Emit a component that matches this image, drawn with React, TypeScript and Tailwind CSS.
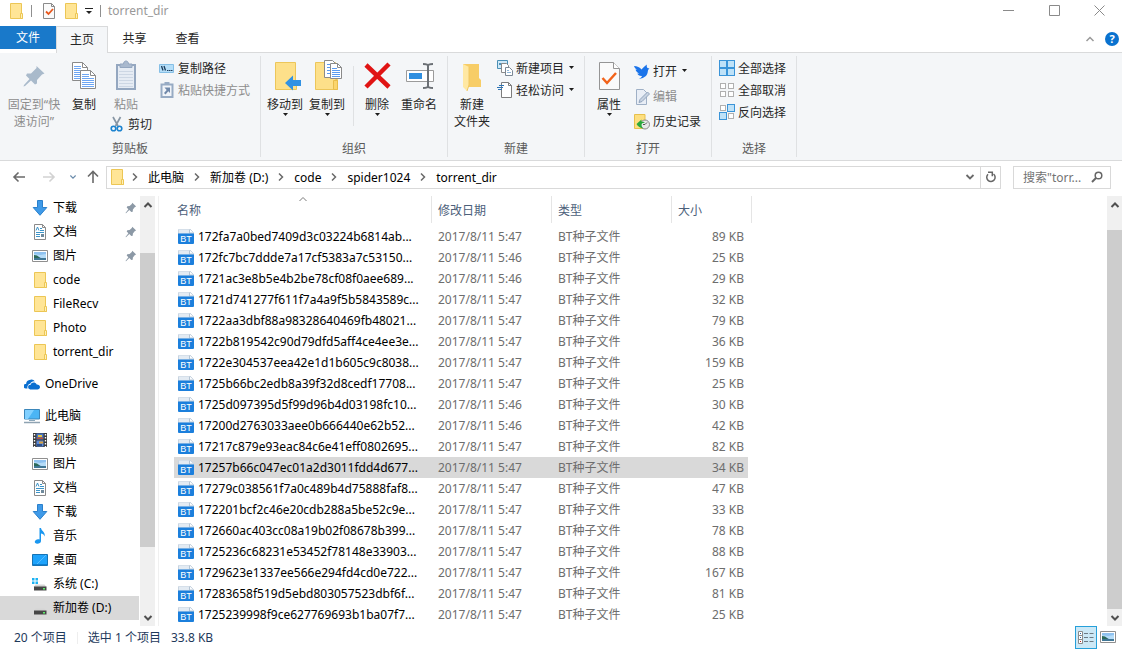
import type { ReactNode } from "react";

const FILES = [
  { name: "172fa7a0bed7409d3c03224b6814ab...", date: "2017/8/11 5:47", size: "89 KB" },
  { name: "172fc7bc7ddde7a17cf5383a7c53150...", date: "2017/8/11 5:46", size: "25 KB" },
  { name: "1721ac3e8b5e4b2be78cf08f0aee689...", date: "2017/8/11 5:46", size: "29 KB" },
  { name: "1721d741277f611f7a4a9f5b5843589c...", date: "2017/8/11 5:47", size: "32 KB" },
  { name: "1722aa3dbf88a98328640469fb48021...", date: "2017/8/11 5:47", size: "79 KB" },
  { name: "1722b819542c90d79dfd5aff4ce4ee3e...", date: "2017/8/11 5:47", size: "36 KB" },
  { name: "1722e304537eea42e1d1b605c9c8038...", date: "2017/8/11 5:47", size: "159 KB" },
  { name: "1725b66bc2edb8a39f32d8cedf17708...", date: "2017/8/11 5:47", size: "25 KB" },
  { name: "1725d097395d5f99d96b4d03198fc10...", date: "2017/8/11 5:46", size: "30 KB" },
  { name: "17200d2763033aee0b666440e62b52...", date: "2017/8/11 5:46", size: "42 KB" },
  { name: "17217c879e93eac84c6e41eff0802695...", date: "2017/8/11 5:47", size: "82 KB" },
  { name: "17257b66c047ec01a2d3011fdd4d677...", date: "2017/8/11 5:47", size: "34 KB", selected: true },
  { name: "17279c038561f7a0c489b4d75888faf8...", date: "2017/8/11 5:47", size: "47 KB" },
  { name: "172201bcf2c46e20cdb288a5be52c9e...", date: "2017/8/11 5:47", size: "33 KB" },
  { name: "172660ac403cc08a19b02f08678b399...", date: "2017/8/11 5:47", size: "78 KB" },
  { name: "1725236c68231e53452f78148e33903...", date: "2017/8/11 5:47", size: "88 KB" },
  { name: "1729623e1337ee566e294fd4cd0e722...", date: "2017/8/11 5:47", size: "167 KB" },
  { name: "17283658f519d5ebd803057523dbf6f...", date: "2017/8/11 5:47", size: "81 KB" },
  { name: "1725239998f9ce627769693b1ba07f7...", date: "2017/8/11 5:47", size: "25 KB" },
];

const CRUMBS = ["此电脑", "新加卷 (D:)", "code", "spider1024", "torrent_dir"];

type IconProps = { className?: string };

/* ---------- small icons ---------- */

function FolderIcon({ className = "h-4 w-4" }: IconProps) {
  return (
    <svg className={className} viewBox="0 0 16 16">
      <path d="M2.500.5h11v11h1v4h-12z" fill="#ffe596" stroke="#ecc655" />
      <path d="M12.500 10.500h2v5h-2z" fill="#fff0b8" stroke="#ecc655" />
    </svg>
  );
}

function CheckPageIcon({ className = "h-4 w-4" }: IconProps) {
  return (
    <svg className={className} viewBox="0 0 16 16">
      <path d="M2.500.5h8l3 3v12h-11z" fill="#fafafa" stroke="#8a8a8a" />
      <path d="M10.500.5v3h3" fill="none" stroke="#8a8a8a" />
      <path d="M5 8.500l2.500 2.500 4.500-5" fill="none" stroke="#e8571c" strokeWidth="1.800" />
    </svg>
  );
}

function Caret() {
  return (
    <svg className="h-[3px] w-[5px]" viewBox="0 0 5 3">
      <path d="M0 0h5L2.500 3z" fill="#1c1c1c" />
    </svg>
  );
}

function Chevron({ className = "", stroke = "#6b6b6b", width = 1.5 }: { className?: string; stroke?: string; width?: number }) {
  return (
    <svg className={`h-[10px] w-[10px] ${className}`} viewBox="0 0 10 10">
      <path d="M1.500 3l3.500 3.500L8.500 3" fill="none" stroke={stroke} strokeWidth={width} />
    </svg>
  );
}

function PinSmall() {
  return (
    <svg className="h-3 w-3" viewBox="0 0 12 12">
      <path d="M7.300.8l3.900 3.700-1.300.6-2 2.400-.2 2.200-1.400.3-2-2L1 11.300l-.5-.4 2.900-3.600-1.700-1.700.6-1.300 2.300-.2 2.200-2z" fill="#8c99a6" />
    </svg>
  );
}

function DownloadIcon() {
  return (
    <svg className="h-4 w-4" viewBox="0 0 16 16">
      <path d="M5.500.5h5v7h4.300L8 15.300 1.200 7.500h4.300z" fill="#3f9ae8" stroke="#2a80cc" />
    </svg>
  );
}

function DocIcon() {
  return (
    <svg className="h-4 w-4" viewBox="0 0 16 16">
      <path d="M2.500.5h8l3 3v12h-11z" fill="#fff" stroke="#8a8a8a" />
      <path d="M10.500.5v3h3" fill="none" stroke="#8a8a8a" />
      <path d="M4 6.500l1.500-3.500L7 6.500M8 4.500h2M8 6.500h4M4 8.500h8M4 10.500h4M4 12.500h4" fill="none" stroke="#3d94c8" />
      <path d="M9 10h3v3H9z" fill="#6f8a9c" />
    </svg>
  );
}

function PictureIcon({ className = "h-4 w-4" }: IconProps) {
  return (
    <svg className={className} viewBox="0 0 16 16">
      <path d="M.5 2.500h15v11H.5z" fill="#fff" stroke="#8f8f8f" />
      <path d="M2 4h12v8H2z" fill="#b5dcf8" />
      <path d="M2 4h12v2L8 7 2 6z" fill="#8fc2f0" />
      <path d="M2 8l4 .5 3 1.500h5v2H2z" fill="#3f7695" />
      <path d="M2 7l3 .5L8 10H2z" fill="#2c6a5a" />
    </svg>
  );
}

function OneDriveIcon() {
  return (
    <svg className="h-4 w-4" viewBox="0 0 16 16">
      <path d="M3.500 12.500H2A2.300 2.300 0 0 1 1.200 8c.3-.1.600-.1.900-.1A4.200 4.200 0 0 1 5.500 4 4.500 4.500 0 0 1 11 5.500c-2-.6-4 .3-4.800 2.200-2 .2-3.200 2.300-2.700 4.800z" fill="#0a6fd0" />
      <path d="M6.200 13.500a2.400 2.400 0 0 1 .5-4.800c.5-2.200 4.300-3.200 6-.3 1.800-.1 3.300 1 3.300 2.600s-1.200 2.500-2.500 2.500z" fill="#0a6fd0" />
    </svg>
  );
}

function PcIcon() {
  return (
    <svg className="h-4 w-4" viewBox="0 0 16 16">
      <path d="M.5 1.500h15v9.500H.5z" fill="#4bb5f5" stroke="#3c87ba" />
      <path d="M1 2h9l-6 9H1z" fill="#81d0ff" />
      <path d="M5 12.500h6" stroke="#8ba7ba" />
      <path d="M0 14.500h16" stroke="#8fa3b2" strokeWidth="1.500" />
    </svg>
  );
}

function VideoIcon() {
  return (
    <svg className="h-4 w-4" viewBox="0 0 16 16">
      <path d="M1 1h14v14H1z" fill="#3a3a3a" />
      <path d="M2.500 2v13M13.500 2v13" stroke="#fff" strokeWidth="1.400" strokeDasharray="1.500 1.500" />
      <path d="M4.500 1.500h7v6h-7z" fill="#4775c9" />
      <path d="M4.500 8.500h7v6h-7z" fill="#5d8bdc" />
      <path d="M6 3h4v2H6z" fill="#e3c540" />
      <path d="M5 5.500h6v1.500H5z" fill="#b7503b" />
      <path d="M7 9.500h4v2H7z" fill="#d9a13c" />
      <path d="M5 12h5v2H5z" fill="#28508f" />
    </svg>
  );
}

function MusicIcon() {
  return (
    <svg className="h-4 w-4" viewBox="0 0 16 16">
      <path d="M7.500 0H9c.3 3 4.300 3.700 3.800 8.500C12 6.300 10.500 5.700 9 5.500V13c0 1.700-1.700 2.700-3.700 2.700-1.700 0-2.800-1-2.500-2.200.4-1.600 2.500-2.800 4.700-2z" fill="#1a97f0" />
    </svg>
  );
}

function DesktopIcon() {
  return (
    <svg className="h-4 w-4" viewBox="0 0 16 16">
      <path d="M.5 2.500h15v11H.5z" fill="#1ea3fb" stroke="#1673b4" />
      <path d="M14 3L4 13" stroke="#57bdff" />
      <path d="M1 12.500h14" stroke="#0d7fd2" />
    </svg>
  );
}

function DriveIcon({ system = false }: { system?: boolean }) {
  return (
    <svg className="h-4 w-4" viewBox="0 0 16 16">
      <path d="M3.500 8.500h9l2 2.500h-13z" fill="#d5d5d5" />
      <path d="M2 10.500h12.500v4H2z" fill="#464646" />
      <path d="M11 12h2v1.500h-2z" fill="#5df06a" />
      {system && <path d="M0 2h2.500v2.500H0zM3.500 2H6v2.500H3.500zM0 5.500h2.500V8H0zM3.500 5.500H6V8H3.500z" fill="#1cb2f2" />}
    </svg>
  );
}

function TorrentIcon() {
  return (
    <svg className="h-4 w-4 shrink-0" viewBox="0 0 16 16">
      <path d="M.5 5V1a1 1 0 0 1 1-1h10.500l3.500 3.500V5z" fill="#e3ebf3" stroke="#c8d4e0" />
      <path d="M11.500.5v3.500h4" fill="#fff" stroke="#b4c4d4" />
      <path d="M0 4.500h16V14a1 1 0 0 1-1 1H1a1 1 0 0 1-1-1z" fill="#1b7fdc" />
      <text x="8" y="13" textAnchor="middle" fontSize="9" fontFamily="Liberation Sans, sans-serif" fill="#fff">BT</text>
    </svg>
  );
}

/* ---------- ribbon icons ---------- */

function PinIcon() {
  return (
    <svg className="h-8 w-8" viewBox="0 0 32 32">
      <path d="M18.500 6l8 7.500-2.500 1-5 5.500v3.500l-2 1-4-4-6 5.500-1.500.5.500-1.500 5.500-6-3.500-3.500 1-2H13l5.500-5.500z" fill="#a9bacb" />
    </svg>
  );
}

function PageLines({ x, y }: { x: number; y: number }) {
  return (
    <g transform={`translate(${x} ${y})`}>
      <path d="M.5.5h10l5 5v13H.5z" fill="#fff" stroke="#8a8a8a" />
      <path d="M10.500.5v5h5" fill="none" stroke="#8a8a8a" />
      <path d="M2 4.500h7M2 6.500h7M2 8.500h12M2 10.500h12M2 12.500h12M2 14.500h12M2 16.500h12" stroke="#6ea6f3" />
    </g>
  );
}

function CopyIcon() {
  return (
    <svg className="h-8 w-8" viewBox="0 0 32 32">
      <PageLines x={4} y={2} />
      <PageLines x={12} y={10} />
    </svg>
  );
}

function PasteIcon() {
  return (
    <svg className="h-8 w-8" viewBox="0 0 32 32">
      <path d="M7 5h18v24H7z" fill="#e6ecf4" stroke="#94a7c0" strokeWidth="2" />
      <path d="M10 4h3.500c0-4 5-4 5 0H22v3.500H10z" fill="#a9b9ce" stroke="#94a7c0" />
      <path d="M9 11.500h14M9 14.500h14M9 17.500h14M9 20.500h14M9 23.500h14M9 26.500h14" stroke="#cdd7e4" />
    </svg>
  );
}

function CutIcon() {
  return (
    <svg className="h-4 w-4" viewBox="0 0 16 16">
      <path d="M4 1l5 9M11.500 1L6.500 10" stroke="#8796a4" strokeWidth="1.700" />
      <circle cx="4.500" cy="12.500" r="2.300" fill="none" stroke="#1c83cf" strokeWidth="1.600" />
      <circle cx="10.500" cy="12.500" r="2.300" fill="none" stroke="#1c83cf" strokeWidth="1.600" />
    </svg>
  );
}

function CopyPathIcon() {
  return (
    <svg className="h-4 w-4" viewBox="0 0 16 16">
      <path d="M.5 4.500h14v8H.5z" fill="#b5def8" stroke="#85bfe6" />
      <path d="M2.500 6l1.500 4.500M5 6l1.500 4.500" stroke="#1d3d5c" strokeWidth="1.300" />
      <path d="M8 10.500h1.500M10 10.500h1.500M12 10.500h1.500" stroke="#1d3d5c" />
    </svg>
  );
}

function PasteShortcutIcon() {
  return (
    <svg className="h-4 w-4" viewBox="0 0 16 16">
      <path d="M2.500 2.500h11v12.500h-11z" fill="#f1f4f9" stroke="#97abc4" strokeWidth="2" />
      <path d="M5.500 0h5v3h-5z" fill="#97abc4" />
      <path d="M5.500 5.500h5.500V11L9.300 9.300 6.500 12.500 5 11l2.700-3z" fill="#7089aa" />
    </svg>
  );
}

function MoveToIcon() {
  return (
    <svg className="h-8 w-8" viewBox="0 0 32 32">
      <path d="M6.500 2.500h20v18h1v9h-21z" fill="#fde08a" stroke="#ecc65a" />
      <path d="M16 23l8-7.500V20h8v6h-8v4.500z" fill="#3292e3" />
    </svg>
  );
}

function CopyToIcon() {
  return (
    <svg className="h-8 w-8" viewBox="0 0 32 32">
      <path d="M4.500 2.500h20v17h2v10h-22z" fill="#fde08a" stroke="#ecc65a" />
      <path d="M22.500 20.500h4v9h-4z" fill="#fbd56d" stroke="#e9bd4b" />
      <path d="M13.500.5h8l4 4v13h-12z" fill="#fff" stroke="#8a8a8a" />
      <path d="M16 4.500h5M16 7.500h4M16 10.500h4M16 13.500h4" stroke="#5a9bf0" />
      <path d="M19.500 3.500h7l4 4v11h-11z" fill="#fff" stroke="#8a8a8a" />
      <path d="M26.500 3.500v4h4" fill="none" stroke="#8a8a8a" />
      <path d="M21 8.500h5M21 10.500h8M21 12.500h8M21 14.500h8M21 16.500h8" stroke="#5a9bf0" />
    </svg>
  );
}

function DeleteIcon() {
  return (
    <svg className="h-8 w-8" viewBox="0 0 32 32">
      <path d="M5 5l23 22M28 4L5 27" stroke="#e01414" strokeWidth="4.500" />
    </svg>
  );
}

function RenameIcon() {
  return (
    <svg className="h-8 w-8" viewBox="0 0 32 32">
      <path d="M3.500 10.500h27v11h-27z" fill="#fff" stroke="#9b9b9b" />
      <path d="M6 13h13v6H6z" fill="#2f8fe0" />
      <path d="M25 5v22" stroke="#6b7075" strokeWidth="2" />
      <path d="M20 4c3 0 5 .5 5 2 0-1.500 2-2 5-2M20 28c3 0 5-.5 5-2 0 1.500 2 2 5 2" fill="none" stroke="#6b7075" strokeWidth="2" />
    </svg>
  );
}

function NewFolderIcon() {
  return (
    <svg className="h-8 w-8" viewBox="0 0 32 32">
      <path d="M7 4h16v14l2 2v7H7z" fill="#f7cd67" />
      <path d="M7 4l6 3v18l-2 6-4-4z" fill="#ffe8a3" />
      <path d="M13 7v18l-2 6" fill="none" stroke="#f0c862" />
    </svg>
  );
}

function NewItemIcon() {
  return (
    <svg className="h-4 w-4" viewBox="0 0 16 16">
      <path d="M.5.5h10v8H.5z" fill="#cfe9f8" stroke="#4a8fb5" />
      <path d="M2 3h6v2H2z" fill="#4f93ba" />
      <path d="M4.500 3.500h5l2 2v7h-7z" fill="#fff" stroke="#8a8a8a" />
      <path d="M8.500 7.500h4l3 3v5h-7z" fill="#fff" stroke="#7c8894" />
      <path d="M10 10.500h2M10 12.500h4" stroke="#8db4d6" />
    </svg>
  );
}

function EasyAccessIcon() {
  return (
    <svg className="h-4 w-4" viewBox="0 0 16 16">
      <path d="M4.500.5h7l3 3v12h-10z" fill="#fff" stroke="#7d7d7d" />
      <path d="M11.500.5v3h3" fill="none" stroke="#7d7d7d" />
      <path d="M2 3.500h5M0 5.500h6M1 7.500h4" stroke="#2e74b5" />
    </svg>
  );
}

function PropertiesIcon() {
  return (
    <svg className="h-8 w-8" viewBox="0 0 32 32">
      <path d="M6.500 2.500h14l6 6v21h-20z" fill="#fafafa" stroke="#959595" />
      <path d="M20.500 2.500v6h6" fill="#fff" stroke="#959595" />
      <path d="M9.500 18l4.500 5 9-10" fill="none" stroke="#f2631a" strokeWidth="2.500" />
    </svg>
  );
}

function ThunderIcon() {
  return (
    <svg className="h-4 w-4" viewBox="0 0 16 16">
      <path d="M0 2c3 .3 6 1.200 7.500 3.500C9 4 10.500 2 13 .5c-.5 1.500-.3 2.500.5 3.500l2 .5c-1 .7-1.500 1.500-1.700 3-.3 3.500-2.500 6.500-9 7.500 2-1 3-2 3.200-3-2.500.2-4-.8-4.700-2.500l2 .2C3.300 8.500 1.700 7 1.500 5.500l1.800.5C1.700 5 .5 3.700 0 2z" fill="#1b74ea" />
    </svg>
  );
}

function EditIcon() {
  return (
    <svg className="h-4 w-4" viewBox="0 0 16 16">
      <path d="M2.500.5h7l3 3v12h-10z" fill="#e9eef6" stroke="#9fb0c6" />
      <path d="M5 13.500l1-3L13.500 3l2 2L8 12.500z" fill="#c7d2e1" stroke="#91a4bd" />
    </svg>
  );
}

function HistoryIcon() {
  return (
    <svg className="h-4 w-4" viewBox="0 0 16 16">
      <path d="M.5.500h10.500v14H.5z" fill="#fddf80" stroke="#e7c04c" />
      <circle cx="11" cy="10.500" r="4.500" fill="#e8e8e8" stroke="#8b8b8b" />
      <path d="M11 10.500l2-2M11 10.500h-2" stroke="#555" />
      <path d="M2.500 10l5-4.500v2.300c2-.3 3 .2 3.500 1-2-.3-3.500.3-3.500 2.200 0 1.500.7 2.500 2 3.500-3.500-.2-5.500-2-7-4.500z" fill="#2aa83c" />
    </svg>
  );
}

const TILES = [
  [0.5, 0.5],
  [8.5, 0.5],
  [0.5, 8.5],
  [8.5, 8.5],
];

function TilesIcon({ on }: { on: boolean[] }) {
  return (
    <svg className="h-4 w-4" viewBox="0 0 16 16">
      {TILES.map(([x, y], i) =>
        on[i] ? (
          <rect key={i} x={x} y={y} width="7" height="7" fill="#bfe2f8" stroke="#3a94d8" />
        ) : (
          <rect key={i} x={x + 1} y={y + 1} width="5" height="5" fill="#fff" stroke="#b0b0b0" />
        ),
      )}
    </svg>
  );
}

/* ---------- ribbon parts ---------- */

function BigButton({ icon, label, caret, disabled, width = "w-[42px]" }: {
  icon: ReactNode;
  label: ReactNode;
  caret?: boolean;
  disabled?: boolean;
  width?: string;
}) {
  return (
    <button type="button" disabled={disabled} className={`flex shrink-0 flex-col items-center whitespace-nowrap pt-[7px] ${width} ${disabled ? "text-[#8d8d8d]" : "text-[#262626]"}`}>
      {icon}
      <span className="mt-1 leading-[17px]">{label}</span>
      {caret && <Caret />}
    </button>
  );
}

function SmallButton({ icon, label, caret, disabled, height = "h-[22px]" }: {
  icon: ReactNode;
  label: string;
  caret?: boolean;
  disabled?: boolean;
  height?: string;
}) {
  return (
    <button type="button" disabled={disabled} className={`flex items-center gap-[3px] whitespace-nowrap ${height} ${disabled ? "text-[#8d8d8d]" : "text-[#262626]"}`}>
      {icon}
      <span>{label}</span>
      {caret && <span className="pb-[2px] pl-[2px]"><Caret /></span>}
    </button>
  );
}

function Group({ title, className, children }: { title: string; className: string; children: ReactNode }) {
  return (
    <section className={`flex shrink-0 flex-col ${className}`}>
      <div className="flex h-[87px] items-start">{children}</div>
      <h2 className="text-center leading-[17px] text-[#5a5a5a]">{title}</h2>
    </section>
  );
}

function Divider() {
  return <span className="my-[3px] w-px shrink-0 bg-[#dfe1e3]" />;
}

function Ribbon() {
  return (
    <div className="flex h-[108px] border-b border-[#d9dadb] bg-[#f4f6f8]">
      <Group title="剪贴板" className="w-[260px]">
        <BigButton disabled width="ml-1 w-[60px]" icon={<PinIcon />} label={<>固定到“快<br />速访问”</>} />
        <BigButton width="w-10" icon={<CopyIcon />} label="复制" />
        <div className="flex w-[55px] flex-col">
          <BigButton disabled width="w-11" icon={<PasteIcon />} label="粘贴" />
          <div className="pl-[5px]">
            <SmallButton icon={<CutIcon />} label="剪切" />
          </div>
        </div>
        <div className="pt-1">
          <SmallButton icon={<CopyPathIcon />} label="复制路径" />
          <SmallButton disabled icon={<PasteShortcutIcon />} label="粘贴快捷方式" />
        </div>
      </Group>
      <Divider />
      <Group title="组织" className="w-[186px]">
        <BigButton caret width="ml-[3px] w-[42px]" icon={<MoveToIcon />} label="移动到" />
        <BigButton caret icon={<CopyToIcon />} label="复制到" />
        <span className="ml-[5px] mr-[2px] mt-[13px] h-[60px] w-px bg-[#dfe1e3]" />
        <BigButton caret icon={<DeleteIcon />} label="删除" />
        <BigButton icon={<RenameIcon />} label="重命名" />
      </Group>
      <Divider />
      <Group title="新建" className="w-[136px]">
        <BigButton width="ml-[3px] w-[42px]" icon={<NewFolderIcon />} label={<>新建<br />文件夹</>} />
        <div className="pl-1 pt-1">
          <SmallButton caret icon={<NewItemIcon />} label="新建项目" />
          <SmallButton caret icon={<EasyAccessIcon />} label="轻松访问" />
        </div>
      </Group>
      <Divider />
      <Group title="打开" className="w-[126px]">
        <BigButton caret width="ml-[3px] w-[42px]" icon={<PropertiesIcon />} label="属性" />
        <div className="pl-1 pt-[6px]">
          <SmallButton caret height="h-[25px]" icon={<ThunderIcon />} label="打开" />
          <SmallButton disabled height="h-[25px]" icon={<EditIcon />} label="编辑" />
          <SmallButton height="h-[25px]" icon={<HistoryIcon />} label="历史记录" />
        </div>
      </Group>
      <Divider />
      <Group title="选择" className="w-[84px]">
        <div className="pl-[7px] pt-1">
          <SmallButton icon={<TilesIcon on={[true, true, true, true]} />} label="全部选择" />
          <SmallButton icon={<TilesIcon on={[false, false, false, false]} />} label="全部取消" />
          <SmallButton icon={<TilesIcon on={[false, true, true, false]} />} label="反向选择" />
        </div>
      </Group>
      <Divider />
    </div>
  );
}

function TitleBar() {
  return (
    <header className="flex h-[26px] items-start justify-between">
      <div className="flex h-[21px] items-center pl-2">
        <FolderIcon />
        <span className="mx-[7px] h-3 w-px bg-[#8f8f8f]" />
        <button type="button" aria-label="属性" className="ml-[2px]"><CheckPageIcon /></button>
        <button type="button" aria-label="新建文件夹" className="ml-[6px]"><FolderIcon /></button>
        <button type="button" aria-label="自定义快速访问工具栏" className="ml-[6px]">
          <svg className="h-2 w-2" viewBox="0 0 8 8">
            <path d="M0 1.500h8" stroke="#222" />
            <path d="M1 4h6L4 7z" fill="#222" />
          </svg>
        </button>
        <span className="mx-[7px] h-3 w-px bg-[#8f8f8f]" />
        <h1 className="text-[#999]">torrent_dir</h1>
      </div>
      <div className="flex">
        <button type="button" aria-label="最小化" className="flex h-[21px] w-[46px] items-center justify-center">
          <svg className="h-[11px] w-[11px]" viewBox="0 0 11 11"><path d="M0 5.500h11" stroke="#8a8a8a" /></svg>
        </button>
        <button type="button" aria-label="最大化" className="flex h-[21px] w-[46px] items-center justify-center">
          <svg className="h-[11px] w-[11px]" viewBox="0 0 11 11"><path d="M.5.5h10v10H.5z" fill="none" stroke="#8a8a8a" /></svg>
        </button>
        <button type="button" aria-label="关闭" className="flex h-[21px] w-[45px] items-center justify-center">
          <svg className="h-[11px] w-[11px]" viewBox="0 0 11 11"><path d="M.5.5l10 10M10.500.5l-10 10" stroke="#8a8a8a" /></svg>
        </button>
      </div>
    </header>
  );
}

function Tabs() {
  return (
    <nav className="flex h-[27px] items-stretch">
      <button type="button" className="mb-1 w-14 bg-[#1979ca] text-white">文件</button>
      <button type="button" className="w-[52px] border-x border-t border-[#d9dadb] bg-[#f4f6f8] pb-[2px] text-[#262626]">主页</button>
      <div className="flex flex-1 items-center border-b border-[#d9dadb]">
        <button type="button" className="w-[53px] pb-px text-[#262626]">共享</button>
        <button type="button" className="w-[53px] pb-px text-[#262626]">查看</button>
        <button type="button" aria-label="最小化功能区" className="ml-auto">
          <Chevron className="rotate-180" stroke="#9a9a9a" />
        </button>
        <button type="button" aria-label="帮助" className="ml-[10px] mr-[3px] flex h-[14px] w-[14px] items-center justify-center rounded-full bg-[#0a72cf] text-[11px] font-bold leading-[14px] text-white">?</button>
      </div>
    </nav>
  );
}

function AddressBar() {
  return (
    <div className="flex h-[35px] items-center pb-[3px] pr-[11px]">
      <button type="button" aria-label="后退" className="ml-3">
        <svg className="h-[14px] w-[14px]" viewBox="0 0 14 14"><path d="M13 7H2M6.500 2.500L2 7l4.500 4.500" fill="none" stroke="#6a6a6a" strokeWidth="1.600" /></svg>
      </button>
      <button type="button" aria-label="前进" className="ml-4">
        <svg className="h-[14px] w-[14px]" viewBox="0 0 14 14"><path d="M1 7h11M7.500 2.500L12 7l-4.500 4.500" fill="none" stroke="#d2d2d2" strokeWidth="1.600" /></svg>
      </button>
      <button type="button" aria-label="最近浏览的位置" className="ml-3">
        <Chevron stroke="#6a8bab" className="scale-75" />
      </button>
      <button type="button" aria-label="上移" className="ml-2">
        <svg className="h-[14px] w-[14px]" viewBox="0 0 14 14"><path d="M7 13V2M2 6.500L7 1.500l5 5" fill="none" stroke="#6a6a6a" strokeWidth="1.600" /></svg>
      </button>
      <div className="ml-[6px] flex h-[23px] min-w-0 flex-1 items-stretch border border-[#d9d9d9]">
        <div className="flex min-w-0 flex-1 items-center overflow-hidden whitespace-nowrap pl-[2px]">
          <FolderIcon className="mr-[-3px] h-4 w-4 shrink-0" />
          {CRUMBS.map((crumb) => (
            <div key={crumb} className="flex items-center">
              <span className="flex w-[26px] justify-center"><Chevron className="h-2 w-2 -rotate-90" stroke="#6a6a6a" /></span>
              <button type="button">{crumb}</button>
            </div>
          ))}
        </div>
        <button type="button" aria-label="以前的位置" className="flex w-5 items-center justify-center"><Chevron stroke="#6a6a6a" width={1.800} /></button>
        <button type="button" aria-label="刷新" className="flex w-5 items-center justify-center border-l border-[#d9d9d9]">
          <svg className="h-3 w-3" viewBox="0 0 12 12">
            <path d="M8.500 3A4.200 4.200 0 1 1 3 3.300" fill="none" stroke="#666" strokeWidth="1.500" />
            <path d="M3 1.200h4.300v4" fill="none" stroke="#666" strokeWidth="1.500" />
          </svg>
        </button>
      </div>
      <label className="ml-3 flex h-[23px] w-[98px] shrink-0 items-center border border-[#d9d9d9] pl-[9px] pr-[7px]">
        <input type="text" aria-label="搜索" placeholder={'搜索"torr...'} className="w-full min-w-0 flex-1 outline-none placeholder:text-[#737373]" />
        <svg className="h-3 w-3 shrink-0" viewBox="0 0 12 12">
          <circle cx="7.500" cy="4.500" r="3.300" fill="none" stroke="#666" strokeWidth="1.500" />
          <path d="M5 7L1 11" stroke="#666" strokeWidth="1.900" />
        </svg>
      </label>
    </div>
  );
}

/* ---------- body ---------- */

function NavItem({ icon, label, pinned, selected, root }: {
  icon: ReactNode;
  label: string;
  pinned?: boolean;
  selected?: boolean;
  root?: boolean;
}) {
  return (
    <li>
      <button type="button" className={`flex h-6 w-full items-center gap-[5px] pb-px pr-[2px] text-left ${root ? "pl-6" : "pl-8"} ${selected ? "bg-[#d9d9d9]" : ""}`}>
        {icon}
        <span className="flex-1 whitespace-nowrap">{label}</span>
        {pinned && <PinSmall />}
      </button>
    </li>
  );
}

function ScrollBar({ top, height }: { top: string; height: string }) {
  return (
    <div className="flex w-[15px] shrink-0 flex-col bg-[#f0f0f0]">
      <span className={`flex justify-center pt-1 ${top}`}><Chevron className="rotate-180" stroke="#505050" width={2} /></span>
      <span className={`bg-[#cdcdcd] ${height}`} />
      <span className="mt-auto flex justify-center pb-[3px]"><Chevron stroke="#505050" width={2} /></span>
    </div>
  );
}

function Sidebar() {
  return (
    <aside className="flex w-[159px] shrink-0 border-r border-[#f0f0f0] pr-[3px]">
      <div className="mr-px flex-1">
        <ul>
          <NavItem pinned icon={<DownloadIcon />} label="下载" />
          <NavItem pinned icon={<DocIcon />} label="文档" />
          <NavItem pinned icon={<PictureIcon />} label="图片" />
          <NavItem icon={<FolderIcon />} label="code" />
          <NavItem icon={<FolderIcon />} label="FileRecv" />
          <NavItem icon={<FolderIcon />} label="Photo" />
          <NavItem icon={<FolderIcon />} label="torrent_dir" />
        </ul>
        <ul className="mt-2">
          <NavItem root icon={<OneDriveIcon />} label="OneDrive" />
        </ul>
        <ul className="mt-2">
          <NavItem root icon={<PcIcon />} label="此电脑" />
          <NavItem icon={<VideoIcon />} label="视频" />
          <NavItem icon={<PictureIcon />} label="图片" />
          <NavItem icon={<DocIcon />} label="文档" />
          <NavItem icon={<DownloadIcon />} label="下载" />
          <NavItem icon={<MusicIcon />} label="音乐" />
          <NavItem icon={<DesktopIcon />} label="桌面" />
          <NavItem icon={<DriveIcon system />} label="系统 (C:)" />
          <NavItem selected icon={<DriveIcon />} label="新加卷 (D:)" />
        </ul>
      </div>
      <ScrollBar top="h-[57px]" height="h-[294px]" />
    </aside>
  );
}

function HeaderCell({ children, pad = "pl-[6px]" }: { children: ReactNode; pad?: string }) {
  return <div className={`relative mb-[3px] flex h-[27px] items-center border-r border-[#e5e5e5] pt-px ${pad}`}>{children}</div>;
}

function FileTable() {
  return (
    <main className="min-w-0 flex-1 pl-[15px]">
      <table className="w-[578px] table-fixed border-collapse whitespace-nowrap">
        <colgroup>
          <col className="w-[258px]" />
          <col className="w-[120px]" />
          <col className="w-[120px]" />
          <col className="w-[76px]" />
          <col className="w-[4px]" />
        </colgroup>
        <thead className="text-left text-[#4c607a]">
          <tr>
            <th className="p-0 font-normal">
              <HeaderCell pad="pl-[3px]">
                名称
                <Chevron className="absolute left-1/2 top-[-2px] -translate-x-1/2 rotate-180" stroke="#7a7a7a" width={1} />
              </HeaderCell>
            </th>
            <th className="p-0 font-normal"><HeaderCell>修改日期</HeaderCell></th>
            <th className="p-0 font-normal"><HeaderCell>类型</HeaderCell></th>
            <th colSpan={2} className="p-0 font-normal"><HeaderCell>大小</HeaderCell></th>
          </tr>
        </thead>
        <tbody className="text-[#6d6d6d]">
          {FILES.map((file) => (
            <tr key={file.name} className="h-[21px]">
              <td className={`p-0 ${file.selected ? "bg-[#d9d9d9]" : ""}`}>
                <div className="flex items-center gap-1 pl-1 text-black">
                  <TorrentIcon />
                  <span>{file.name}</span>
                </div>
              </td>
              <td className={`p-0 pl-[6px] ${file.selected ? "bg-[#d9d9d9]" : ""}`}>{file.date}</td>
              <td className={`p-0 pl-[6px] ${file.selected ? "bg-[#d9d9d9]" : ""}`}>BT种子文件</td>
              <td className={`p-0 pr-1 text-right ${file.selected ? "bg-[#d9d9d9]" : ""}`}>{file.size}</td>
              <td className="p-0" />
            </tr>
          ))}
        </tbody>
      </table>
    </main>
  );
}

function StatusBar() {
  return (
    <footer className="flex h-[23px] items-center pl-[14px] pr-[6px] text-[#1e395b]">
      <span>20 个项目</span>
      <span className="mx-[10px] h-3 w-px bg-[#eee]" />
      <span>选中 1 个项目</span>
      <span className="ml-[10px]">33.8 KB</span>
      <button type="button" aria-label="详细信息" className="ml-auto flex h-[23px] w-[22px] items-center justify-center border border-[#26a0da] bg-[#cce8f6]">
        <svg className="h-4 w-4" viewBox="0 0 16 16">
          <path d="M.5 1.500h4v4h-4zM.5 5.500h4v4h-4zM.5 9.500h4v4h-4z" fill="#fff" stroke="#8b8b8b" />
          <path d="M2 3h1v1H2zM2 7h1v1H2z" fill="#2d67a5" />
          <path d="M2 11h1v1H2z" fill="#b22" />
          <path d="M6 3.500h4M11.500 3.500h4M6 7.500h4M11.500 7.500h4M6 11.500h4M11.500 11.500h4" stroke="#6d7b85" />
        </svg>
      </button>
      <button type="button" aria-label="大缩略图" className="ml-[3px] pb-[2px]"><PictureIcon /></button>
    </footer>
  );
}

export default function App() {
  return (
    <div className="flex min-h-screen flex-col overflow-hidden bg-white font-['Noto_Sans','Noto_Sans_CJK_SC',sans-serif] text-[12px] leading-[17px] text-black">
      <TitleBar />
      <Tabs />
      <Ribbon />
      <AddressBar />
      <div className="flex flex-1 items-stretch">
        <Sidebar />
        <FileTable />
        <ScrollBar top="h-[34px]" height="h-[379px]" />
      </div>
      <StatusBar />
    </div>
  );
}
